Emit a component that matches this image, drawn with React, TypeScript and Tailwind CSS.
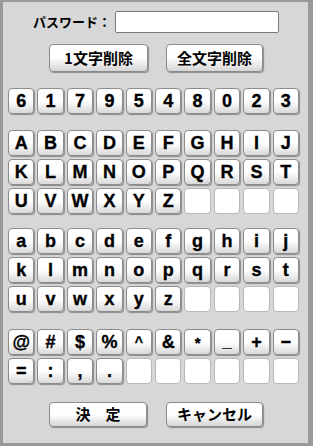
import React from "react";

const keyBase =
  "h-[26px] flex items-center justify-center rounded-[4px] border border-[#8c8c8c] bg-gradient-to-b from-white via-white to-[#d9d9d9] shadow-[1px_1px_1px_rgba(0,0,0,0.35)] font-bold text-black leading-none [-webkit-text-stroke:0.35px_black]";
const keyEmpty =
  "h-[26px] rounded-[4px] border border-[#b8b8b8] bg-white";

function keyClass(k: string) {
  if (k === "^") return `${keyBase} text-[14px]`;
  if (k === "*") return `${keyBase} text-[15px]`;
  if (k === "_") return `${keyBase} text-[16px] text-[#555]`;
  return `${keyBase} text-[18px]`;
}

function Row({ keys }: { keys: string[] }) {
  const cells = [...keys];
  while (cells.length < 10) cells.push("");
  return (
    <div className="grid grid-cols-10 gap-x-[3px] w-[291px]">
      {cells.map((k, i) =>
        k ? (
          <div key={i} className={keyClass(k)}>
            {k}
          </div>
        ) : (
          <div key={i} className={keyEmpty} />
        )
      )}
    </div>
  );
}

const btn =
  "flex items-center justify-center rounded-[4px] border border-[#8c8c8c] bg-gradient-to-b from-white via-white to-[#d5d5d5] shadow-[1px_1px_1px_rgba(0,0,0,0.35)] text-[15px] font-bold text-black";

export default function App() {
  return (
    <div
      className="w-[313px] h-[446px] bg-[#d7d7d7] border-t-[2px] border-l-[3px] border-r-[5px] border-b-[3px] border-[#999999] box-border overflow-hidden"
      style={{ fontFamily: '"Liberation Sans", "Noto Sans CJK JP", sans-serif' }}
    >
      <div className="flex items-center mt-[9px] ml-[30px] gap-[4px]">
        <span
          className="text-[13px] font-bold text-black"
          style={{ fontFamily: '"Noto Sans CJK JP", sans-serif' }}
        >
          パスワード：
        </span>
        <div className="w-[164px] h-[22px] bg-white border border-[#7a7a7a] rounded-[2px]" />
      </div>

      <div
        className="flex mt-[11px] ml-[46px] gap-[18px]"
        style={{ fontFamily: '"Noto Sans CJK JP", sans-serif' }}
      >
        <div className={`${btn} w-[99px] h-[28px]`}>1文字削除</div>
        <div className={`${btn} w-[97px] h-[28px]`}>全文字削除</div>
      </div>

      <div className="ml-[5px] mt-[16px]">
        <Row keys={["6", "1", "7", "9", "5", "4", "8", "0", "2", "3"]} />
      </div>

      <div className="ml-[5px] mt-[16px] flex flex-col gap-y-[3px]">
        <Row keys={["A", "B", "C", "D", "E", "F", "G", "H", "I", "J"]} />
        <Row keys={["K", "L", "M", "N", "O", "P", "Q", "R", "S", "T"]} />
        <Row keys={["U", "V", "W", "X", "Y", "Z"]} />
      </div>

      <div className="ml-[5px] mt-[14px] flex flex-col gap-y-[3px]">
        <Row keys={["a", "b", "c", "d", "e", "f", "g", "h", "i", "j"]} />
        <Row keys={["k", "l", "m", "n", "o", "p", "q", "r", "s", "t"]} />
        <Row keys={["u", "v", "w", "x", "y", "z"]} />
      </div>

      <div className="ml-[5px] mt-[17px] flex flex-col gap-y-[3px]">
        <Row keys={["@", "#", "$", "%", "^", "&", "*", "_", "+", "−"]} />
        <Row keys={["=", ":", ",", "."]} />
      </div>

      <div
        className="flex mt-[18px] ml-[46px] gap-[19px]"
        style={{ fontFamily: '"Noto Sans CJK JP", sans-serif' }}
      >
        <div className={`${btn} w-[98px] h-[25px]`}>決　定</div>
        <div className={`${btn} w-[97px] h-[25px]`}>キャンセル</div>
      </div>
    </div>
  );
}
